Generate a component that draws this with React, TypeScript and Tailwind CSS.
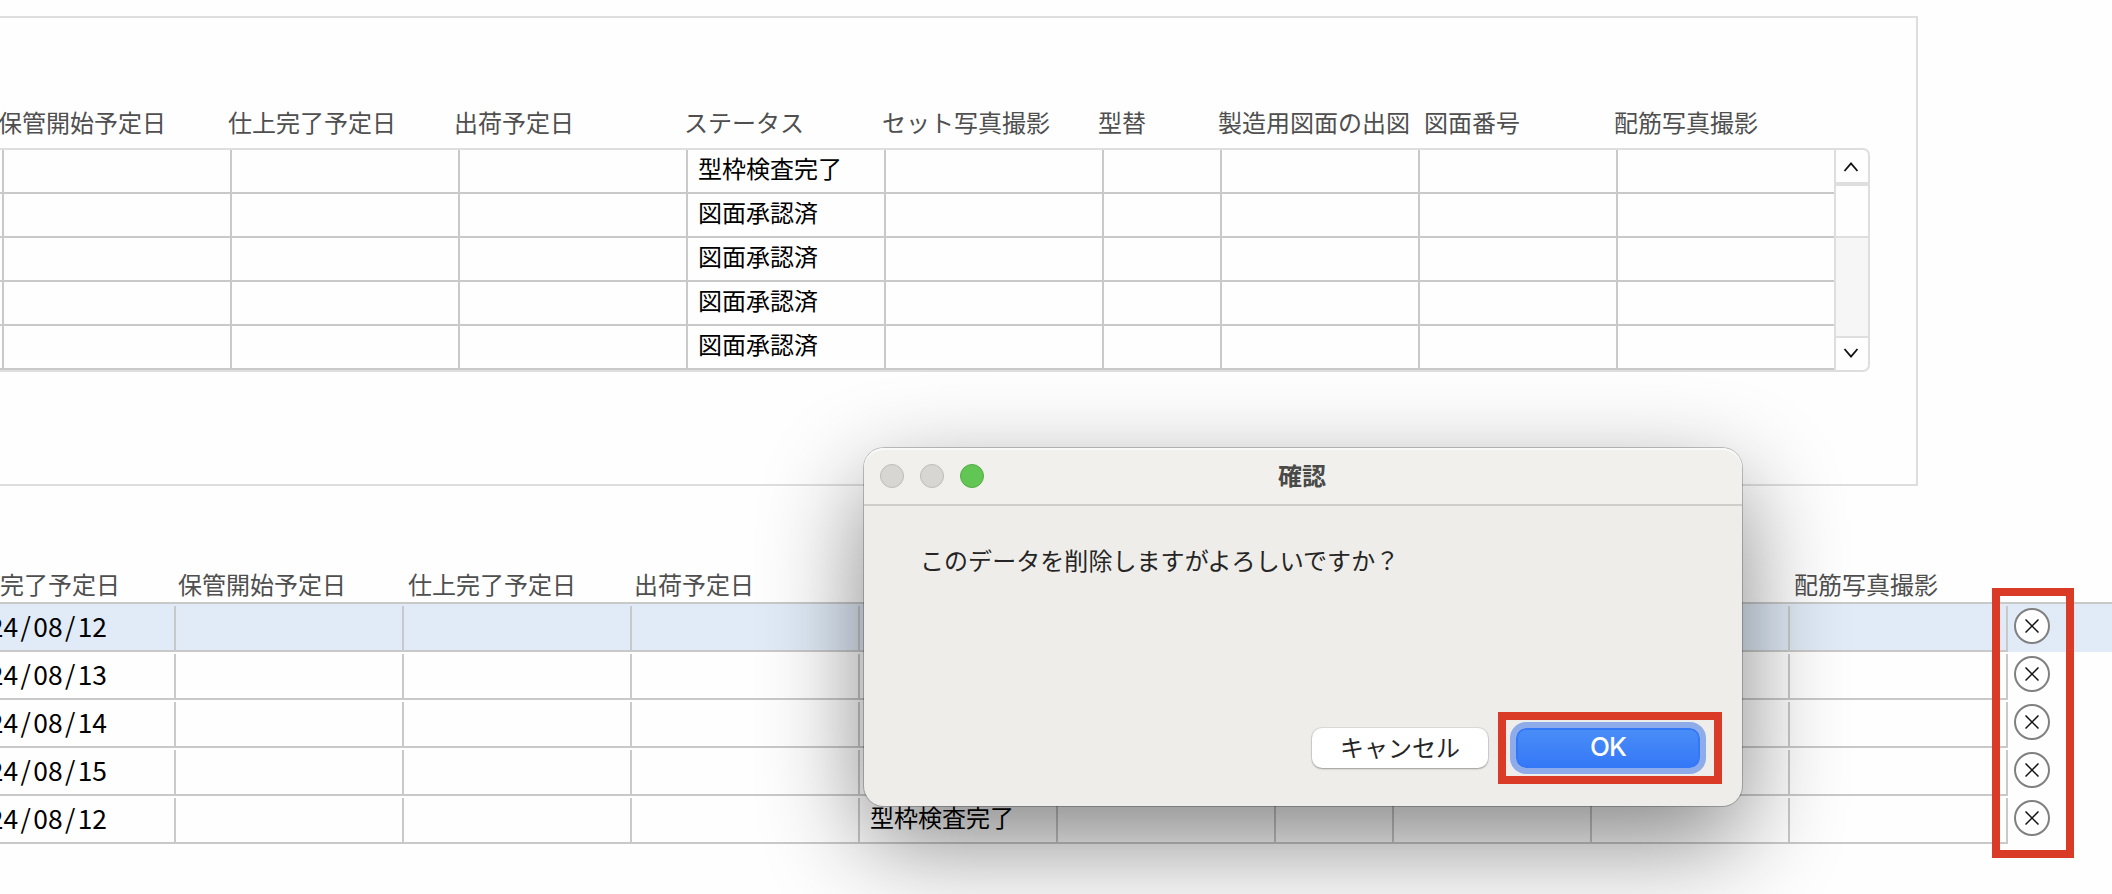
const CJK = "font-['Noto_Sans_CJK_JP',sans-serif]";

type Head = { text: string; width: string };

const upperHeads: Head[] = [
  { text: '保管開始予定日', width: 'w-[230px]' },
  { text: '仕上完了予定日', width: 'w-[226px]' },
  { text: '出荷予定日', width: 'w-[230px]' },
  { text: 'ステータス', width: 'w-[198px]' },
  { text: 'セット写真撮影', width: 'w-[216px]' },
  { text: '型替', width: 'w-[120px]' },
  { text: '製造用図面の出図', width: 'w-[206px]' },
  { text: '図面番号', width: 'w-[190px]' },
  { text: '配筋写真撮影', width: 'w-[200px]' },
];

const lowerHeads: Head[] = [
  { text: '完了予定日', width: 'w-[178px]' },
  { text: '保管開始予定日', width: 'w-[230px]' },
  { text: '仕上完了予定日', width: 'w-[226px]' },
  { text: '出荷予定日', width: 'w-[1160px]' },
  { text: '配筋写真撮影', width: 'w-[200px]' },
];

const upperCols = [
  'w-[228px]',
  'w-[228px]',
  'w-[228px]',
  'w-[198px]',
  'w-[218px]',
  'w-[118px]',
  'w-[198px]',
  'w-[198px]',
  'w-[218px]',
];

const lowerCols = [
  'w-[228px]',
  'w-[228px]',
  'w-[228px]',
  'w-[198px]',
  'w-[218px]',
  'w-[118px]',
  'w-[198px]',
  'w-[198px]',
  'w-[220px] border-r-2',
];

const upperRows = ['型枠検査完了', '図面承認済', '図面承認済', '図面承認済', '図面承認済'];

const lowerRows = [
  { date: ['24', '08', '12'], status: '', selected: true },
  { date: ['24', '08', '13'], status: '', selected: false },
  { date: ['24', '08', '14'], status: '', selected: false },
  { date: ['24', '08', '15'], status: '', selected: false },
  { date: ['24', '08', '12'], status: '型枠検査完了', selected: false },
];

function HeadRow({ heads }: { heads: Head[] }) {
  return (
    <div className="flex h-6 text-[24px] leading-6 text-[#4f4f4f]">
      {heads.map((h) => (
        <div key={h.text} className={`${h.width} shrink-0 whitespace-nowrap`}>
          {h.text}
        </div>
      ))}
    </div>
  );
}

function Chevron({ d }: { d: string }) {
  return (
    <svg width="18" height="12" viewBox="0 0 18 12" fill="none" stroke="#111" strokeWidth="1.8">
      <path d={d} />
    </svg>
  );
}

function Scrollbar() {
  return (
    <div className="flex w-[34px] flex-col border-l-2 border-[#dedede]">
      <div className="flex h-8 items-center justify-center pr-[2px] pt-[2px]">
        <Chevron d="M2.5 10 9 2.4l6.5 7.6" />
      </div>
      <div className="h-1 bg-[#dedede]" />
      <div className="h-[50px]" />
      <div className="h-[102px] border-y-2 border-[#dedede] bg-[#f6f6f6]" />
      <div className="flex h-8 items-center justify-center pb-[2px] pr-[2px]">
        <Chevron d="M2.5 2 9 9.6 15.5 2" />
      </div>
    </div>
  );
}

function UpperTable() {
  return (
    <div className="flex w-[1870px] rounded-r-[7px] border-y-2 border-r-2 border-[#dedede]">
      <div className="w-[1834px]">
        {upperRows.map((status, i) => (
          <div key={i} className="flex h-11 border-b-2 border-[#c9c9c9] pl-[2px]">
            {upperCols.map((w, c) => (
              <div key={c} className={`${w} shrink-0 border-l-2 border-[#c9c9c9]`}>
                {c === 3 && (
                  <div className="pl-[10px] pt-[6px] text-[24px] leading-6 text-black">{status}</div>
                )}
              </div>
            ))}
          </div>
        ))}
      </div>
      <Scrollbar />
    </div>
  );
}

function DeleteButton() {
  return (
    <button className="flex size-9 items-center justify-center rounded-full border-2 border-[#808080] bg-white">
      <svg width="14" height="14" viewBox="0 0 14 14" stroke="#111" strokeWidth="1.5">
        <path d="M.5 .5l13 13M13.5 .5l-13 13" />
      </svg>
    </button>
  );
}

function LowerTable() {
  return (
    <div className="w-[2112px] border-t-2 border-[#c9c9c9]">
      {lowerRows.map((row, i) => (
        <div key={i} className={`flex h-12 ${row.selected ? 'bg-[#e0ebf7]' : ''}`}>
          <div className="flex w-[2008px] border-b-2 border-[#c9c9c9] pt-[2px]">
            <div className="flex w-[174px] shrink-0 justify-end pr-[67px] pt-[8px] text-[26.4px] leading-6 text-black">
              {row.date[0]}
              <span className="mx-[2.4px]">/</span>
              {row.date[1]}
              <span className="mx-[2.4px]">/</span>
              {row.date[2]}
            </div>
            {lowerCols.map((w, c) => (
              <div key={c} className={`${w} shrink-0 border-l-2 border-[#c9c9c9]`}>
                {c === 3 && (
                  <div className="pl-[10px] pt-[7px] text-[24px] leading-6 text-black">
                    {row.status}
                  </div>
                )}
              </div>
            ))}
          </div>
          <div className="pl-[6px] pt-1">
            <DeleteButton />
          </div>
        </div>
      ))}
    </div>
  );
}

function ConfirmDialog() {
  return (
    <div className="absolute left-[864px] top-[448px] flex h-[358px] w-[878px] flex-col overflow-visible rounded-[20px] bg-[#eeede9] shadow-[0_0_0_1px_rgba(0,0,0,0.22),0_36px_100px_rgba(0,0,0,0.48)]">
      <div className="flex h-[58px] items-center rounded-t-[20px] border-b-2 border-[#cfcecb] bg-[#f1f0ec] px-4 shadow-[inset_0_2px_0_#f9f9f7]">
        <div className="flex w-[120px] gap-4">
          <span className="size-6 rounded-full border border-[#bdbcb9] bg-[#d7d6d2]" />
          <span className="size-6 rounded-full border border-[#bdbcb9] bg-[#d7d6d2]" />
          <span className="size-6 rounded-full border border-[#54ab45] bg-[#62c654]" />
        </div>
        <div className="flex-1 pb-[2px] pr-[122px] text-center text-[24px] font-bold leading-6 text-[#4a4a49]">
          確認
        </div>
      </div>
      <p className="pl-14 pt-[42px] text-[24px] leading-6 tracking-[0.06px] text-[#252525]">
        このデータを削除しますがよろしいですか？
      </p>
      <div className="mt-auto flex justify-end gap-7 pb-[38px] pr-[42px]">
        <button className="flex h-10 w-[176px] items-center justify-center rounded-[10px] bg-white pb-[2px] text-[24px] leading-6 text-[#252525] shadow-[0_0_0_1px_rgba(0,0,0,0.07),0_1px_2px_rgba(0,0,0,0.3)]">
          キャンセル
        </button>
        <button className="flex h-10 w-[184px] items-center justify-center rounded-[10px] border-2 border-[#3478f6] bg-linear-to-b from-[#4a8ef8] to-[#3577f7] bg-origin-border pb-[2px] font-['Inter',sans-serif] text-[26px] font-medium leading-6 tracking-[-0.8px] text-white shadow-[0_0_0_6px_#8eacea]">
          OK
        </button>
      </div>
    </div>
  );
}

export default function App() {
  return (
    <div className={`relative h-[894px] w-[2112px] overflow-hidden bg-[#fefefe] pt-4 ${CJK}`}>
      <section className="h-[470px] w-[1918px] border-y-2 border-r-2 border-[#dedede]">
        <div className="-ml-[2px] pb-[14px] pt-[92px]">
          <HeadRow heads={upperHeads} />
        </div>
        <UpperTable />
      </section>
      <section className="pt-[86px]">
        <div className="pb-[6px]">
          <HeadRow heads={lowerHeads} />
        </div>
        <LowerTable />
      </section>
      <ConfirmDialog />
      <div className="absolute left-[1498px] top-[712px] h-[72px] w-[224px] border-8 border-[#da3b26]" />
      <div className="absolute left-[1992px] top-[588px] h-[270px] w-[82px] border-8 border-[#da3b26]" />
    </div>
  );
}
